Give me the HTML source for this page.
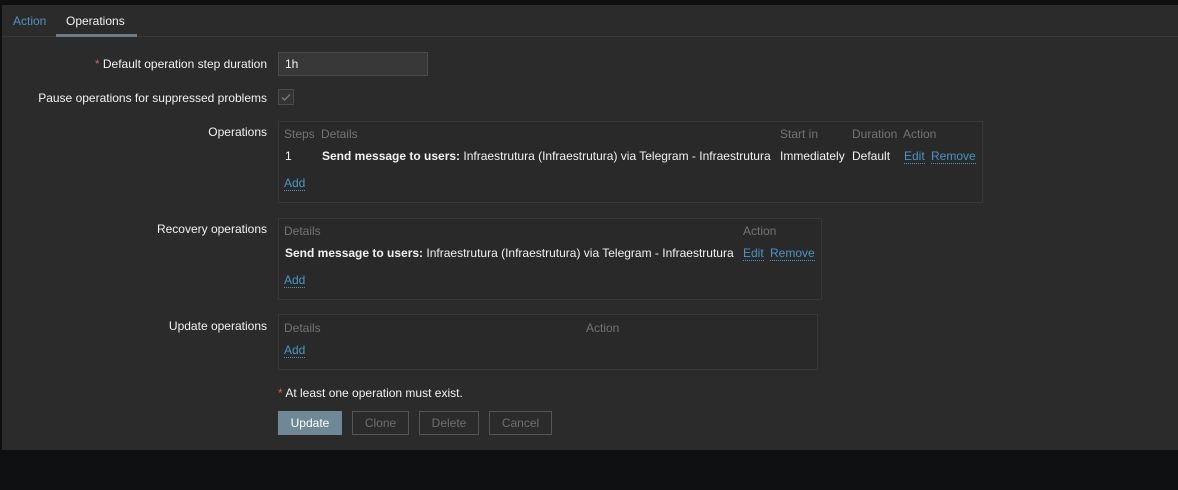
<!DOCTYPE html>
<html><head><style>
body{margin:0;width:1178px;height:490px;background:#0e0f11;font-family:"Liberation Sans",Arial,sans-serif;font-size:12px;color:#f2f2f2;position:relative;overflow:hidden}
.panel{position:absolute;left:2px;top:5px;width:1176px;height:445px;background:#2b2b2b}
.a{position:absolute;white-space:nowrap}
.tabline{position:absolute;left:2px;top:36px;width:1176px;height:1px;background:#383838}
.lbl{right:911px;text-align:right}
.box{position:absolute;border:1px solid #383838;background:#292929;box-sizing:border-box}
.h{color:#737373}
.l{color:#4796c4;border-bottom:1px dotted #4796c4;line-height:14px}
.star{color:#e45959}
.btn{position:absolute;top:411px;height:24px;border:1px solid #555;box-sizing:border-box;color:#6e6e6e;text-align:center;line-height:22px;font-size:12px}
</style></head><body>
<div class="panel"></div>
<div class="tabline"></div>
<div class="a" style="left:13px;top:14px;color:#4796c4">Action</div>
<div class="a" style="left:66px;top:14px">Operations</div>
<div class="a" style="left:56px;top:34px;width:81px;height:3px;background:#6e7b84"></div>

<div class="a lbl" style="top:57px"><span class="star">*</span> Default operation step duration</div>
<div class="a" style="left:278px;top:52px;width:150px;height:24px;background:#383838;border:1px solid #4a4a4a;box-sizing:border-box"></div>
<div class="a" style="left:285px;top:57px">1h</div>

<div class="a lbl" style="top:91px">Pause operations for suppressed problems</div>
<div class="a" style="left:278px;top:89px;width:16px;height:16px;border:1px solid #4a4a4a;box-sizing:border-box;background:#333"><svg width="14" height="14" style="position:absolute;left:0;top:0"><path d="M3 7.5l2.5 2.5L11 4.5" stroke="#777" stroke-width="1.5" fill="none"/></svg></div>

<div class="a lbl" style="top:125px">Operations</div>
<div class="box" style="left:278px;top:121px;width:705px;height:82px"></div>
<div class="a h" style="left:284px;top:127px">Steps</div>
<div class="a h" style="left:321px;top:127px">Details</div>
<div class="a h" style="left:780px;top:127px">Start in</div>
<div class="a h" style="left:852px;top:127px">Duration</div>
<div class="a h" style="left:903px;top:127px">Action</div>
<div class="a" style="left:285px;top:149px">1</div>
<div class="a" style="left:322px;top:149px"><b>Send message to users:</b> Infraestrutura (Infraestrutura) via Telegram - Infraestrutura</div>
<div class="a" style="left:780px;top:149px">Immediately</div>
<div class="a" style="left:852px;top:149px">Default</div>
<div class="a l" style="left:904px;top:149px">Edit</div>
<div class="a l" style="left:931px;top:149px">Remove</div>
<div class="a l" style="left:284px;top:176px">Add</div>

<div class="a lbl" style="top:222px">Recovery operations</div>
<div class="box" style="left:278px;top:218px;width:544px;height:82px"></div>
<div class="a h" style="left:284px;top:224px">Details</div>
<div class="a h" style="left:743px;top:224px">Action</div>
<div class="a" style="left:285px;top:246px"><b>Send message to users:</b> Infraestrutura (Infraestrutura) via Telegram - Infraestrutura</div>
<div class="a l" style="left:743px;top:246px">Edit</div>
<div class="a l" style="left:770px;top:246px">Remove</div>
<div class="a l" style="left:284px;top:273px">Add</div>

<div class="a lbl" style="top:319px">Update operations</div>
<div class="box" style="left:278px;top:314px;width:540px;height:56px"></div>
<div class="a h" style="left:284px;top:321px">Details</div>
<div class="a h" style="left:586px;top:321px">Action</div>
<div class="a l" style="left:284px;top:343px">Add</div>

<div class="a" style="left:278px;top:386px"><span class="star">*</span> At least one operation must exist.</div>
<div class="btn" style="left:278px;width:64px;background:#6e8896;border-color:#6e8896;color:#fff">Update</div>
<div class="btn" style="left:352px;width:57px">Clone</div>
<div class="btn" style="left:419px;width:60px">Delete</div>
<div class="btn" style="left:489px;width:63px">Cancel</div>
</body></html>
